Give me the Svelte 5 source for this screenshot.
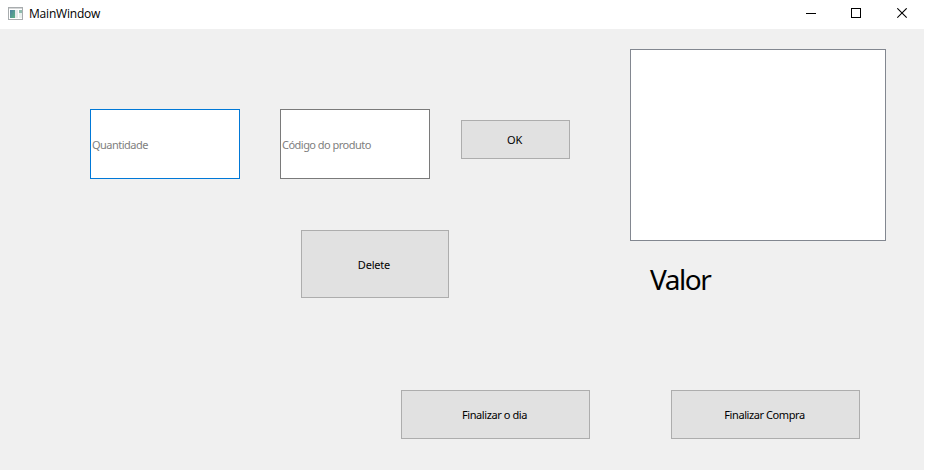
<script>
  let quantity = $state('');
  let code = $state('');
</script>

<div class="window">
  <header>
    <svg class="app-icon" width="15" height="14" viewBox="0 0 15 14" shape-rendering="crispEdges">
      <defs>
        <linearGradient id="pane" x1="0" y1="0" x2="1" y2="1">
          <stop offset="0" stop-color="#4a7fa0" />
          <stop offset="1" stop-color="#5db385" />
        </linearGradient>
      </defs>
      <rect x="0.5" y="0.5" width="14" height="12" fill="#fff" stroke="#a8acae" />
      <rect x="1" y="1" width="13" height="1" fill="#d5d7d8" />
      <rect x="2" y="3" width="5" height="8" fill="url(#pane)" />
      <rect x="7" y="3" width="3" height="8" fill="#e4e9ea" />
      <rect x="11" y="3" width="3" height="3" fill="#8fbcae" />
      <rect x="11" y="6" width="3" height="5" fill="#e9f1ee" />
    </svg>
    <h1>MainWindow</h1>
    <div class="controls">
      <svg width="11" height="11" viewBox="0 0 11 11" shape-rendering="crispEdges"><path d="M0 5.5H10" stroke="#000" /></svg>
      <svg width="11" height="11" viewBox="0 0 11 11" shape-rendering="crispEdges"><rect x=".5" y=".5" width="9" height="9" fill="none" stroke="#000" /></svg>
      <svg width="11" height="11" viewBox="0 0 11 11"><path d="M.3 .3L9.7 9.7M9.7 .3L.3 9.7" stroke="#000" stroke-width="1.1" /></svg>
    </div>
  </header>
  <main>
    <div class="upper">
      <div class="form">
        <div class="fields">
          <input class="focused" placeholder="Quantidade" bind:value={quantity} />
          <input class="code" placeholder="Código do produto" bind:value={code} />
          <button class="ok">OK</button>
        </div>
        <button class="delete">Delete</button>
      </div>
      <aside>
        <div class="list"></div>
        <p>Valor</p>
      </aside>
    </div>
    <footer>
      <button>Finalizar o dia</button>
      <button>Finalizar Compra</button>
    </footer>
  </main>
</div>

<style>
  :global(body) { margin: 0; background: #fff; overflow: hidden; }
  * { box-sizing: border-box; }
  .window {
    width: 925px; height: 470px; display: flex; flex-direction: column;
    background: #fff; color: #000;
    font: 11px "Noto Sans", "Open Sans", sans-serif;
  }
  header { height: 29px; display: flex; align-items: flex-start; padding-left: 8px; }
  .app-icon { margin-top: 7px; }
  h1 {
    margin: 5px 0 0 6px; font: 12px/17px "Open Sans", "Noto Sans", sans-serif;
    letter-spacing: -0.2px;
  }
  .controls { margin: 8px 17px 0 auto; display: flex; gap: 34px; }
  .controls svg { display: block; }
  .controls svg:last-child { margin-left: 1px; }
  main { width: 924px; height: 441px; background: #f0f0f0; }
  .upper { display: flex; height: 361px; }
  .form { width: 630px; padding: 80px 0 0 90px; }
  .fields { display: flex; align-items: flex-start; height: 70px; }
  input {
    width: 150px; height: 70px; margin: 0 40px 0 0; padding: 0 1px;
    border: 1px solid #7a7a7a; border-radius: 0; background: #fff;
    font: inherit; letter-spacing: -0.52px; outline: none;
  }
  input::placeholder { color: #808080; opacity: 1; }
  .focused { border-color: #0078d7; }
  .code { margin-right: 31px; }
  button {
    display: flex; align-items: center; justify-content: center;
    margin: 0; padding: 0 2px 1px 0; border: 1px solid #adadad; border-radius: 0;
    background: #e1e1e1; color: #000; font: inherit; letter-spacing: -0.42px;
  }
  .ok { width: 109px; height: 39px; margin-top: 11px; letter-spacing: -0.3px; }
  .delete { width: 148px; height: 68px; margin: 51px 0 0 211px; padding-bottom: 0; letter-spacing: -0.2px; }
  aside { width: 256px; padding-top: 20px; }
  .list { height: 192px; border: 1px solid #828790; background: #fff; }
  p {
    margin: 19px 0 0 20px; font-size: 28px; line-height: 38px; letter-spacing: -1.45px;
  }
  footer { display: flex; gap: 81px; padding-left: 401px; }
  footer button { width: 189px; height: 49px; }
</style>
